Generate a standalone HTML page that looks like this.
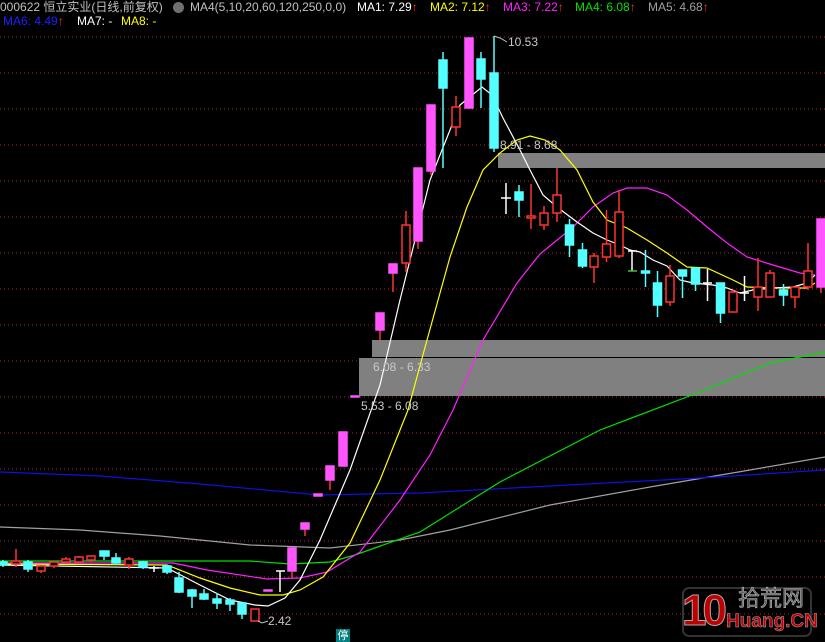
<!DOCTYPE html>
<html><head><meta charset="utf-8"><style>
html,body{margin:0;padding:0;background:#000;}
#w{position:relative;width:825px;height:642px;overflow:hidden;background:#000;font-family:"Liberation Sans","Noto Sans CJK SC",sans-serif;}
.t{position:absolute;font-size:12px;line-height:14px;white-space:nowrap;}
.ar{color:#ff3030;}
</style></head><body><div id="w">
<svg width="825" height="642" style="position:absolute;left:0;top:0">
<g stroke="#a02828" stroke-width="1" stroke-dasharray="1,3">
<line x1="0" y1="37" x2="825" y2="37"/><line x1="0" y1="73" x2="825" y2="73"/><line x1="0" y1="109" x2="825" y2="109"/><line x1="0" y1="145" x2="825" y2="145"/><line x1="0" y1="181" x2="825" y2="181"/><line x1="0" y1="217" x2="825" y2="217"/><line x1="0" y1="253" x2="825" y2="253"/><line x1="0" y1="289" x2="825" y2="289"/><line x1="0" y1="325" x2="825" y2="325"/><line x1="0" y1="361" x2="825" y2="361"/><line x1="0" y1="397" x2="825" y2="397"/><line x1="0" y1="433" x2="825" y2="433"/><line x1="0" y1="469" x2="825" y2="469"/><line x1="0" y1="505" x2="825" y2="505"/><line x1="0" y1="541" x2="825" y2="541"/><line x1="0" y1="577" x2="825" y2="577"/><line x1="0" y1="614" x2="825" y2="614"/>
</g>
<rect x="498" y="153" width="327" height="15" fill="#808080"/>
<rect x="372" y="340" width="453" height="17" fill="#808080"/>
<rect x="359" y="358" width="466" height="38" fill="#808080"/>
<g fill="none" stroke-width="1.2">
<polyline stroke="#a0a0a0" points="0,527 80,530 160,536 250,545 330,548 400,540 450,530 550,505 650,487 750,470 825,457"/>
<polyline stroke="#1010e0" points="0,472 100,476 200,484 320,495 420,493 550,486 700,478 825,470"/>
<polyline stroke="#00e000" points="0,561 250,561 290,564 330,562 355,555 420,532 500,482 600,430 700,392 770,363 825,352"/>
<polyline stroke="#ff20ff" points="0,563 173,563 207,570 267,579 300,578 327,572 360,552 400,500 430,455 453,410 483,340 517,283 540,254 573,227 593,207 613,193 627,188 647,188 667,195 687,210 707,227 727,243 747,257 773,265 800,273 815,275"/>
<polyline stroke="#ffff00" points="0,564 167,565 200,578 230,588 260,595 283,595 300,590 323,577 350,543 380,480 408,410 427,340 450,257 467,207 483,170 500,153 517,140 530,136 545,140 560,150 577,170 593,202 607,220 627,228 647,240 667,253 687,267 707,268 733,280 747,287 773,288 807,288 815,283"/>
<polyline stroke="#ffffff" points="0,565 167,568 200,585 230,600 255,605 268,606 285,598 300,580 320,540 350,470 380,385 400,300 430,180 460,105 482,87 492,95 503,118 520,150 530,170 543,195 557,207 577,222 593,233 607,240 620,245 630,250 640,252 653,260 667,266 680,280 693,283 713,285 727,288 740,293 753,290 773,288 793,287 807,283 815,275"/>
</g>
<g id="c" stroke-width="1.5">
<g fill="#54ffff" stroke="#54ffff">
<line x1="3" y1="560" x2="3" y2="567"/><rect x="-1" y="562" width="8" height="3"/>
<line x1="28" y1="560" x2="28" y2="572"/><rect x="24" y="562" width="8" height="7"/>
<line x1="104" y1="551" x2="104" y2="560"/><rect x="100" y="551" width="9" height="5"/>
<line x1="116" y1="553" x2="116" y2="565"/><rect x="112" y="558" width="8" height="5"/>
<line x1="143" y1="561" x2="143" y2="569"/><rect x="139" y="562" width="8" height="5"/>
<line x1="167" y1="565" x2="167" y2="574"/><rect x="163" y="566" width="8" height="6"/>
<line x1="179" y1="572" x2="179" y2="593"/><rect x="175" y="578" width="8" height="14"/>
<line x1="192" y1="589" x2="192" y2="608"/><rect x="188" y="590" width="8" height="6"/>
<line x1="204" y1="589" x2="204" y2="600"/><rect x="200" y="594" width="8" height="5"/>
<line x1="217" y1="593" x2="217" y2="609"/><rect x="213" y="599" width="8" height="4"/>
<line x1="230" y1="598" x2="230" y2="611"/><rect x="226" y="600" width="8" height="4"/>
<line x1="242" y1="603" x2="242" y2="619"/><rect x="238" y="603" width="8" height="11"/>
<line x1="443" y1="52" x2="443" y2="168"/><rect x="439" y="60" width="8" height="28"/>
<line x1="481" y1="52" x2="481" y2="108"/><rect x="477" y="59" width="8" height="20"/>
<line x1="494" y1="36" x2="494" y2="152"/><rect x="490" y="73" width="8" height="75"/>
<line x1="519" y1="185" x2="519" y2="217"/><rect x="515" y="192" width="8" height="8"/>
<line x1="569.5" y1="219" x2="569.5" y2="257"/><rect x="565.5" y="225" width="8" height="20"/>
<line x1="582.5" y1="243" x2="582.5" y2="268"/><rect x="578.5" y="250" width="8" height="16"/>
<line x1="645.5" y1="250" x2="645.5" y2="287"/><rect x="641.5" y="271" width="8" height="2"/>
<line x1="657.5" y1="271" x2="657.5" y2="317"/><rect x="653.5" y="283" width="8" height="22"/>
<line x1="682.5" y1="270" x2="682.5" y2="298"/><rect x="678.5" y="270" width="8" height="6"/>
<line x1="695.5" y1="267" x2="695.5" y2="291"/><rect x="691.5" y="268" width="8" height="16"/>
<line x1="720.5" y1="283" x2="720.5" y2="323"/><rect x="716.5" y="283" width="8" height="30"/>
<line x1="783.5" y1="284" x2="783.5" y2="306"/><rect x="779.5" y="290" width="8" height="5"/>
</g>
<g fill="#000" stroke="#ff3232">
<line x1="16" y1="549" x2="16" y2="567"/><rect x="12" y="561" width="8" height="3"/>
<line x1="41" y1="565" x2="41" y2="573"/><rect x="37" y="566" width="8" height="5"/>
<line x1="54" y1="561" x2="54" y2="568"/><rect x="50" y="562" width="8" height="4"/>
<line x1="66" y1="557" x2="66" y2="564"/><rect x="62" y="559" width="8" height="3"/>
<line x1="79" y1="556" x2="79" y2="563"/><rect x="75" y="557" width="8" height="5"/>
<line x1="91" y1="555" x2="91" y2="562"/><rect x="87" y="556" width="8" height="4"/>
<line x1="129" y1="557" x2="129" y2="569"/><rect x="125" y="559" width="8" height="6"/>
<rect x="251" y="609" width="8" height="12"/>
<line x1="406" y1="211" x2="406" y2="272"/><rect x="402" y="225" width="8" height="38"/>
<line x1="456" y1="96" x2="456" y2="136"/><rect x="452" y="107" width="8" height="20"/>
<line x1="531" y1="184" x2="531" y2="229"/><rect x="527" y="216" width="8" height="2"/>
<line x1="544" y1="206" x2="544" y2="230"/><rect x="540" y="213" width="8" height="12"/>
<line x1="557" y1="168" x2="557" y2="222"/><rect x="553" y="195" width="8" height="18"/>
<line x1="594" y1="253" x2="594" y2="283"/><rect x="590" y="256" width="8" height="11"/>
<line x1="606.5" y1="210" x2="606.5" y2="262"/><rect x="602.5" y="244" width="8" height="13"/>
<line x1="619" y1="190" x2="619" y2="258"/><rect x="615" y="212" width="8" height="44"/>
<line x1="670" y1="265" x2="670" y2="306"/><rect x="666" y="276" width="8" height="26"/>
<line x1="733" y1="290" x2="733" y2="312"/><rect x="729" y="292" width="8" height="20"/>
<line x1="758" y1="258" x2="758" y2="311"/><rect x="754" y="287" width="8" height="10"/>
<line x1="770" y1="270" x2="770" y2="297"/><rect x="766" y="273" width="8" height="24"/>
<line x1="795" y1="287" x2="795" y2="308"/><rect x="791" y="287" width="8" height="10"/>
<line x1="808" y1="243" x2="808" y2="290"/><rect x="804" y="271" width="8" height="16"/>
</g>
<g fill="#ff55ff" stroke="#ff55ff">
<rect x="264" y="590" width="8" height="1"/>
<line x1="292" y1="547" x2="292" y2="578" stroke="#ff3232"/><rect x="288" y="548" width="8" height="23"/>
<line x1="305" y1="523" x2="305" y2="536" stroke="#ff3232"/><rect x="301" y="523" width="8" height="6"/>
<rect x="314" y="494" width="8" height="2"/>
<line x1="330" y1="466" x2="330" y2="490" stroke="#ff3232"/><rect x="326" y="466" width="8" height="14"/>
<rect x="339" y="432" width="8" height="34"/>
<rect x="351" y="396" width="8" height="1"/>
<line x1="380" y1="313" x2="380" y2="340" stroke="#ff3232"/><rect x="376" y="313" width="8" height="17"/>
<line x1="393" y1="264" x2="393" y2="292" stroke="#ff3232"/><rect x="389" y="264" width="8" height="9"/>
<line x1="418" y1="168" x2="418" y2="249" stroke="#ff3232"/><rect x="414" y="168" width="8" height="73"/>
<line x1="431" y1="105" x2="431" y2="175" stroke="#ff3232"/><rect x="427" y="105" width="8" height="66"/>
<rect x="465" y="38" width="8" height="70"/>
<line x1="821" y1="219" x2="821" y2="293" stroke="#ff3232"/><rect x="817" y="219" width="10" height="68"/>
</g>
<g stroke="#ffffff" fill="none">
<line x1="154" y1="566" x2="154" y2="572"/><line x1="149" y1="568" x2="159" y2="568"/>
<line x1="280" y1="571" x2="280" y2="592"/><line x1="276" y1="571" x2="285" y2="571"/>
<line x1="506" y1="183" x2="506" y2="214"/><line x1="501" y1="198" x2="511" y2="198"/>
<line x1="632" y1="251" x2="632" y2="271"/><line x1="628" y1="251" x2="637" y2="251"/><line x1="628" y1="271" x2="637" y2="271" stroke="#40c040"/>
<line x1="707.5" y1="269" x2="707.5" y2="301"/><line x1="703" y1="283" x2="712" y2="283"/>
<line x1="744.5" y1="276" x2="744.5" y2="301"/><line x1="740" y1="293" x2="749" y2="293"/>
</g>
</g>
<polyline points="494,36 500,38 507,42" stroke="#c0c0c0" fill="none"/>
<polyline points="258,621 262,623 268,621" stroke="#c0c0c0" fill="none"/>
<rect x="683" y="588" width="128" height="48" rx="6" fill="none" stroke="#333" stroke-width="2"/>
</svg>
<div class="t" style="left:500px;top:138px;color:#c8c8c8">8.91 - 8.68</div>
<div class="t" style="left:373px;top:360px;color:#c8c8c8">6.08 - 6.33</div>
<div class="t" style="left:361px;top:399px;color:#c8c8c8">5.53 - 6.08</div>
<div class="t" style="left:508px;top:35px;color:#c8c8c8">10.53</div>
<div class="t" style="left:268px;top:614px;color:#c8c8c8">2.42</div>
<div class="t" style="left:336px;top:629px;width:14px;height:13px;background:#008080;color:#fff;font-size:11px;text-align:center;">停</div>
<div class="t" style="left:0;top:0;color:#c0c0c0">000622 恒立实业(日线,前复权)</div>
<div style="position:absolute;left:173px;top:2px;width:11px;height:11px;border-radius:50%;background:#707070;"></div>
<div class="t" style="left:190px;top:0;color:#c0c0c0">MA4(5,10,20,60,120,250,0,0)</div>
<div class="t" style="left:357px;top:0;color:#fff">MA1: 7.29<span class="ar">↑</span></div>
<div class="t" style="left:430px;top:0;color:#ffff00">MA2: 7.12<span class="ar">↑</span></div>
<div class="t" style="left:503px;top:0;color:#ff20ff">MA3: 7.22<span class="ar">↑</span></div>
<div class="t" style="left:575px;top:0;color:#00e000">MA4: 6.08<span class="ar">↑</span></div>
<div class="t" style="left:648px;top:0;color:#a0a0a0">MA5: 4.68<span class="ar">↑</span></div>
<div class="t" style="left:3px;top:14px;color:#2020ff">MA6: 4.49<span class="ar">↑</span></div>
<div class="t" style="left:77px;top:14px;color:#fff">MA7: -</div>
<div class="t" style="left:121px;top:14px;color:#ffff00">MA8: -</div>
<div class="t" style="left:682px;top:588px;font-size:44px;line-height:46px;font-weight:bold;color:#c00000;letter-spacing:-4px;-webkit-text-stroke:1px #aaa;">10</div>
<div class="t" style="left:738px;top:587px;font-size:22px;line-height:24px;color:#555;-webkit-text-stroke:0.6px #bbb;">拾荒网</div>
<div class="t" style="left:726px;top:612px;font-size:19px;line-height:20px;font-weight:bold;color:#c00000;-webkit-text-stroke:0.5px #aaa;">Huang.CN</div>
</div></body></html>
